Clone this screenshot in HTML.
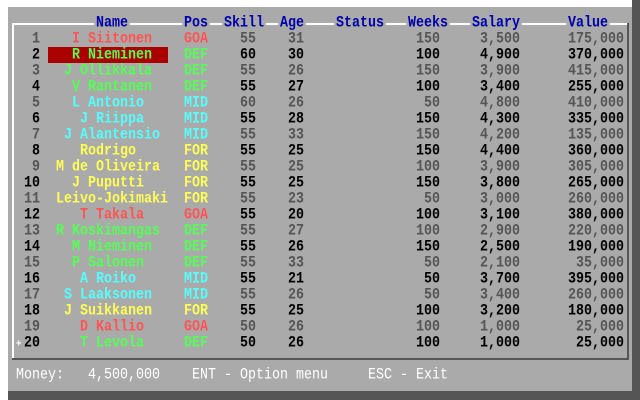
<!DOCTYPE html>
<html><head><meta charset="utf-8"><style>
body{margin:0;width:640px;height:400px;background:#fff;position:relative;overflow:hidden;font-family:"Liberation Mono",monospace;font-size:13.333px;font-weight:bold;}
#sh1{position:absolute;left:632px;top:0;width:8px;height:400px;background:#555;}
#sh2{position:absolute;left:8px;top:391px;width:632px;height:9px;background:#555;}
#p{position:absolute;left:8px;top:7px;width:624px;height:384px;background:#aaa;}
.fl{position:absolute;background:#fff}
.fd{position:absolute;background:#555}
.r{position:absolute;left:0;width:640px;height:16px;}
.r span,.h span{position:absolute;top:0;line-height:16px;white-space:pre;transform:scaleY(1.15);}
.h{position:absolute;left:0;top:16px;height:16px;width:640px}
.h span{color:#0000aa;background:#aaa;padding:0 2px;margin-left:-2px}
.n{left:16px;width:24px;text-align:right}
.p{left:184px}
.s{left:232px;width:24px;text-align:right}
.a{left:280px;width:24px;text-align:right}
.w{left:400px;width:40px;text-align:right}
.sa{left:472px;width:48px;text-align:right}
.v{left:560px;width:64px;text-align:right}
.g{color:#555}.b{color:#000}
.R{color:#ff5555}.G{color:#55ff55}.C{color:#55ffff}.Y{color:#ffff55}
.f{position:absolute;top:368px;color:#fff;font-weight:normal;line-height:16px;white-space:pre;transform:scaleY(1.15)}
</style></head><body>
<div id="p"></div><div id="sh1"></div><div id="sh2"></div>
<div class="fl" style="left:12px;top:23px;width:617px;height:2px"></div>
<div class="fl" style="left:12px;top:23px;width:2px;height:337px"></div>
<div class="fd" style="left:12px;top:358px;width:617px;height:2px"></div>
<div class="fd" style="left:627px;top:23px;width:2px;height:337px"></div>
<div class="h"><span style="left:96px">Name</span><span style="left:184px">Pos</span><span style="left:224px">Skill</span><span style="left:280px">Age</span><span style="left:336px">Status</span><span style="left:408px">Weeks</span><span style="left:472px">Salary</span><span style="left:568px">Value</span></div>
<div style="position:absolute;left:48px;top:47px;width:120px;height:16px;background:#aa0000"></div>

<div class="r g" style="top:32px"><span class="n">1</span><span class="R" style="left:72px">I Siitonen</span><span class="p R">GOA</span><span class="s">55</span><span class="a">31</span><span class="w">150</span><span class="sa">3,500</span><span class="v">175,000</span></div>
<div class="r b" style="top:48px"><span class="n">2</span><span class="G" style="left:72px">R Nieminen</span><span class="p G">DEF</span><span class="s">60</span><span class="a">30</span><span class="w">100</span><span class="sa">4,900</span><span class="v">370,000</span></div>
<div class="r g" style="top:64px"><span class="n">3</span><span class="G" style="left:64px">J Ollikkala</span><span class="p G">DEF</span><span class="s">55</span><span class="a">26</span><span class="w">150</span><span class="sa">3,900</span><span class="v">415,000</span></div>
<div class="r b" style="top:80px"><span class="n">4</span><span class="G" style="left:72px">V Rantanen</span><span class="p G">DEF</span><span class="s">55</span><span class="a">27</span><span class="w">100</span><span class="sa">3,400</span><span class="v">255,000</span></div>
<div class="r g" style="top:96px"><span class="n">5</span><span class="C" style="left:72px">L Antonio</span><span class="p C">MID</span><span class="s">60</span><span class="a">26</span><span class="w">50</span><span class="sa">4,800</span><span class="v">410,000</span></div>
<div class="r b" style="top:112px"><span class="n">6</span><span class="C" style="left:80px">J Riippa</span><span class="p C">MID</span><span class="s">55</span><span class="a">28</span><span class="w">150</span><span class="sa">4,300</span><span class="v">335,000</span></div>
<div class="r g" style="top:128px"><span class="n">7</span><span class="C" style="left:64px">J Alantensio</span><span class="p C">MID</span><span class="s">55</span><span class="a">33</span><span class="w">150</span><span class="sa">4,200</span><span class="v">135,000</span></div>
<div class="r b" style="top:144px"><span class="n">8</span><span class="Y" style="left:80px">Rodrigo</span><span class="p Y">FOR</span><span class="s">55</span><span class="a">25</span><span class="w">150</span><span class="sa">4,400</span><span class="v">360,000</span></div>
<div class="r g" style="top:160px"><span class="n">9</span><span class="Y" style="left:56px">M de Oliveira</span><span class="p Y">FOR</span><span class="s">55</span><span class="a">25</span><span class="w">100</span><span class="sa">3,900</span><span class="v">305,000</span></div>
<div class="r b" style="top:176px"><span class="n">10</span><span class="Y" style="left:72px">J Puputti</span><span class="p Y">FOR</span><span class="s">55</span><span class="a">25</span><span class="w">150</span><span class="sa">3,800</span><span class="v">265,000</span></div>
<div class="r g" style="top:192px"><span class="n">11</span><span class="Y" style="left:56px">Leivo-Jokimaki</span><span class="p Y">FOR</span><span class="s">55</span><span class="a">23</span><span class="w">50</span><span class="sa">3,000</span><span class="v">260,000</span></div>
<div class="r b" style="top:208px"><span class="n">12</span><span class="R" style="left:80px">T Takala</span><span class="p R">GOA</span><span class="s">55</span><span class="a">20</span><span class="w">100</span><span class="sa">3,100</span><span class="v">380,000</span></div>
<div class="r g" style="top:224px"><span class="n">13</span><span class="G" style="left:56px">R Koskimangas</span><span class="p G">DEF</span><span class="s">55</span><span class="a">27</span><span class="w">100</span><span class="sa">2,900</span><span class="v">220,000</span></div>
<div class="r b" style="top:240px"><span class="n">14</span><span class="G" style="left:72px">M Nieminen</span><span class="p G">DEF</span><span class="s">55</span><span class="a">26</span><span class="w">150</span><span class="sa">2,500</span><span class="v">190,000</span></div>
<div class="r g" style="top:256px"><span class="n">15</span><span class="G" style="left:72px">P Salonen</span><span class="p G">DEF</span><span class="s">55</span><span class="a">33</span><span class="w">50</span><span class="sa">2,100</span><span class="v">35,000</span></div>
<div class="r b" style="top:272px"><span class="n">16</span><span class="C" style="left:80px">A Roiko</span><span class="p C">MID</span><span class="s">55</span><span class="a">21</span><span class="w">50</span><span class="sa">3,700</span><span class="v">395,000</span></div>
<div class="r g" style="top:288px"><span class="n">17</span><span class="C" style="left:64px">S Laaksonen</span><span class="p C">MID</span><span class="s">55</span><span class="a">26</span><span class="w">50</span><span class="sa">3,400</span><span class="v">260,000</span></div>
<div class="r b" style="top:304px"><span class="n">18</span><span class="Y" style="left:64px">J Suikkanen</span><span class="p Y">FOR</span><span class="s">55</span><span class="a">25</span><span class="w">100</span><span class="sa">3,200</span><span class="v">180,000</span></div>
<div class="r g" style="top:320px"><span class="n">19</span><span class="R" style="left:80px">D Kallio</span><span class="p R">GOA</span><span class="s">50</span><span class="a">26</span><span class="w">100</span><span class="sa">1,000</span><span class="v">25,000</span></div>
<div class="r b" style="top:336px"><span style="left:16px;color:#fff;font-size:9px">+</span><span class="n">20</span><span class="G" style="left:80px">T Levola</span><span class="p G">DEF</span><span class="s">50</span><span class="a">26</span><span class="w">100</span><span class="sa">1,000</span><span class="v">25,000</span></div>

<div class="f" style="left:16px">Money:</div>
<div class="f" style="left:88px">4,500,000</div>
<div class="f" style="left:192px">ENT - Option menu</div>
<div class="f" style="left:368px">ESC - Exit</div>
</body></html>
